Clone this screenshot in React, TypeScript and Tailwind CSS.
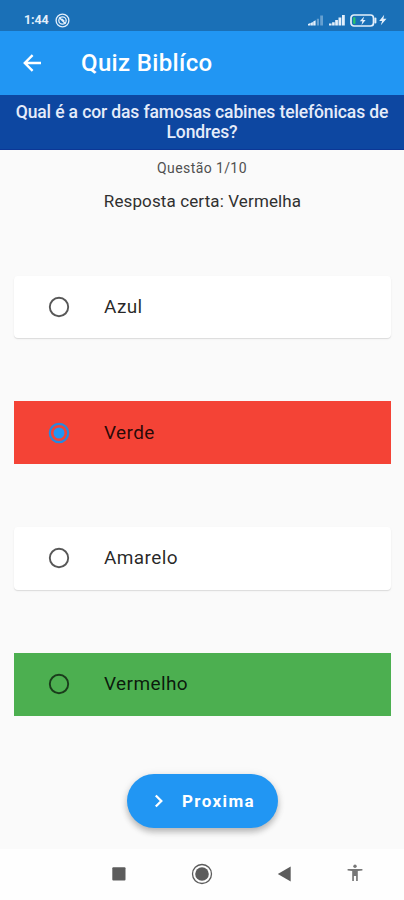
import React from 'react';

type Status = 'idle' | 'wrong' | 'right';

const answers: { label: string; status: Status; selected?: boolean }[] = [
  { label: 'Azul', status: 'idle' },
  { label: 'Verde', status: 'wrong', selected: true },
  { label: 'Amarelo', status: 'idle' },
  { label: 'Vermelho', status: 'right' },
];

const cardStyle: Record<Status, string> = {
  idle: 'bg-white rounded-[4px] shadow-[0_1px_1px_rgba(0,0,0,0.1),0_1px_3px_rgba(0,0,0,0.04)]',
  wrong: 'bg-[#f44336]',
  right: 'bg-[#4caf50]',
};

function StatusBar() {
  return <div className="h-[31px] bg-[#1a70b7] flex items-center pt-[9px] pl-6 pr-[17px] text-[#e3effb]">
      <span className="text-[12.5px] leading-none font-bold w-[25px] tracking-[-0.1px]">1:44</span>
      <svg className="ml-[6px]" width="15" height="15" viewBox="0 0 15 15" fill="none" stroke="currentColor">
        <circle cx="7.5" cy="7.5" r="6.4" strokeWidth="1.3" />
        <circle cx="7.5" cy="7.5" r="3.7" strokeWidth="1.3" />
        <path d="M4.2 4.4l6.4 6.4M6.8 6.1l2.4 2.2" strokeWidth="1.5" />
      </svg>
      <svg className="ml-auto" width="16" height="12" viewBox="0 0 16 12" fill="currentColor">
        <path d="M0 11.5V10l2.4-1v2.5zM2.7 11.5V8.9l2.2-1v3.6zM5.2 11.5V7.4l2.4-1.2v5.3z" />
        <path d="M8.8 11.5V4.8h2.2v6.7zM12.2 11.5V1.5h2.8v10z" opacity=".38" />
      </svg>
      <svg className="ml-[5px]" width="17" height="12" viewBox="0 0 17 12" fill="currentColor">
        <path d="M0 11.5V9.6h2.6v1.9zM3.1 11.5V8.3h2.6v3.2zM6.2 11.5V6h2.7v5.5zM9.5 11.5V3.5h2.8v8zM13 11.5V1h2.8v10.5z" />
      </svg>
      <svg className="ml-[4px]" width="28" height="13" viewBox="0 0 28 13" fill="none">
        <rect x="1" y="1" width="22.5" height="11" rx="3" stroke="currentColor" strokeWidth="1.7" />
        <path d="M25.4 4.6v3.8" stroke="currentColor" strokeWidth="2" strokeLinecap="round" />
        <rect x="3.2" y="3.3" width="2.2" height="6.5" fill="#28c76a" />
        <path d="M14.2 2.5L9.8 7.2h2.6l-.9 3.7 4.1-5h-2.5z" fill="currentColor" />
      </svg>
      <svg className="ml-[1px]" width="8" height="12" viewBox="0 0 8 12" fill="currentColor">
        <path d="M5.2.8L.2 6.9h2.9L1.8 11.3l5.7-6.6H4.4z" />
      </svg>
    </div>;
}

function Radio({ selected }: { selected?: boolean }) {
  return <svg className="shrink-0" width="22" height="22" viewBox="0 0 22 22" fill="none">
      <circle cx="11" cy="11" r="9.2" stroke={selected ? '#2789df' : 'rgba(0,0,0,0.66)'} strokeWidth={selected ? 2.2 : 1.9} />
      {selected && <circle cx="11" cy="11" r="5.5" fill="#2196f3" />}
    </svg>;
}

export default function App() {
  return <div className="w-[404px] h-[900px] overflow-hidden flex flex-col bg-[#fafafa] font-['Roboto',sans-serif]">
      <StatusBar />
      <header className="h-[64px] bg-[#2196f3] flex items-center text-white">
        <svg className="ml-[23px] shrink-0" width="19" height="18" viewBox="0 0 19 18" fill="none" stroke="currentColor" strokeWidth="2.4">
          <path d="M18 9H2M9.6 1.2L1.8 9l7.8 7.8" />
        </svg>
        <h1 className="ml-[39px] text-[24px] leading-none font-medium tracking-[0.35px]">Quiz Biblíco</h1>
      </header>
      <section className="h-[55px] bg-[#0d47a1] border-b border-[#0c3796] pt-[7px] text-center text-[17.5px] leading-[20px] font-medium text-[#e5ecfa] tracking-[-0.12px]">
        <p className="whitespace-nowrap">Qual é a cor das famosas cabines telefônicas de</p>
        <p>Londres?</p>
      </section>
      <p className="mt-[9px] text-center text-[14px] leading-[18px] text-[#505050] tracking-[0.4px]">Questão 1/10</p>
      <p className="mt-[14px] pl-[1px] text-center text-[17px] leading-[20px] text-[#303030] tracking-[0.12px]">Resposta certa: Vermelha</p>
      <main className="mt-[64.5px] flex flex-col gap-[63px] pl-[14px] pr-[13px]">
        {answers.map(answer => <div key={answer.label} className={`h-[62.8px] flex items-center pl-[34px] ${cardStyle[answer.status]}`}>
            <Radio selected={answer.selected} />
            <span className="ml-[34px] pb-[1px] text-[19px] leading-none text-black/85 tracking-[0.4px]">{answer.label}</span>
          </div>)}
      </main>
      <button className="mt-[58px] self-center w-[151px] h-[54px] rounded-full bg-[#2196f3] text-white flex items-center shadow-[0_4px_6px_rgba(0,0,0,0.24),0_1px_10px_rgba(0,0,0,0.08)]">
        <svg className="ml-[27px] shrink-0" width="10" height="14" viewBox="0 0 10 14" fill="none" stroke="currentColor" strokeWidth="2.3">
          <path d="M1.8 1.5L7.3 7l-5.5 5.5" />
        </svg>
        <span className="ml-[18.5px] pt-[1px] text-[17px] leading-none font-bold tracking-[1.4px]">Proxima</span>
      </button>
      <nav className="mt-auto h-[51px] pb-[2px] bg-[#fefefe] flex items-center text-[#5c5c5c]">
        <svg className="ml-[112px]" width="14" height="14" viewBox="0 0 14 14">
          <rect x=".3" y=".3" width="13.2" height="13.2" rx="1" fill="currentColor" />
        </svg>
        <svg className="ml-[65px]" width="22" height="22" viewBox="0 0 22 22" fill="none">
          <circle cx="11" cy="11" r="9.5" stroke="currentColor" strokeWidth="1.3" />
          <circle cx="11" cy="11" r="6.8" fill="currentColor" />
        </svg>
        <svg className="ml-[64px]" width="14" height="16" viewBox="0 0 14 16">
          <path d="M13.7.6v14.8L.8 8z" fill="currentColor" />
        </svg>
        <svg className="ml-[56px] mb-[2px]" width="16" height="18" viewBox="0 0 16 18" fill="#777">
          <circle cx="8" cy="2.2" r="1.7" />
          <path d="M.6 4.9h14.8v1.6l-4.6.5v10H9.1v-5H6.9v5H5.2V7L.6 6.5z" />
        </svg>
      </nav>
    </div>;
}
